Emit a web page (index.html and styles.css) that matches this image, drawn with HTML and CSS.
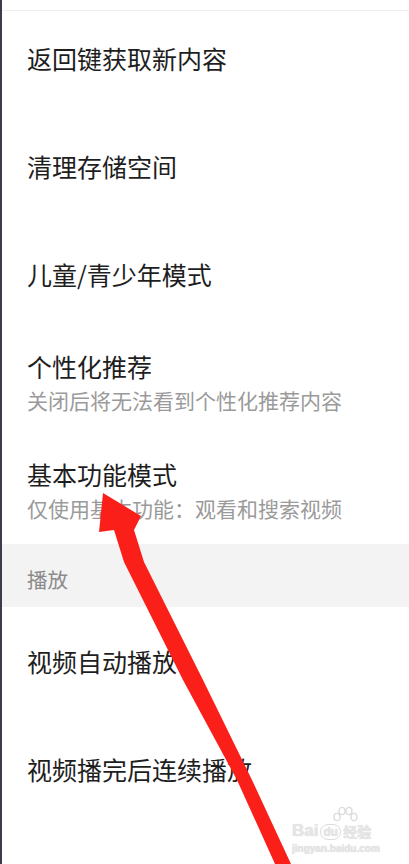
FILE: index.html
```html
<!DOCTYPE html>
<html lang="zh-CN">
<head>
<meta charset="UTF-8">
<title>设置</title>
<link rel="stylesheet" href="styles.css">
</head>
<body>

<div class="screen">

  <!-- ===== TOP EDGE ===== -->
  <div class="topEdge"></div>

  <!-- ===== GENERAL ===== -->
  <div class="row first">
    <div class="title">返回键获取新内容</div>
  </div>

  <div class="row">
    <div class="title">清理存储空间</div>
  </div>

  <div class="row">
    <div class="title">儿童/青少年模式</div>
  </div>

  <div class="row">
    <div class="title">个性化推荐</div>
    <div class="sub">关闭后将无法看到个性化推荐内容</div>
  </div>

  <div class="row">
    <div class="title">基本功能模式</div>
    <div class="sub">仅使用基本功能：观看和搜索视频</div>
  </div>

  <!-- ===== PLAYBACK ===== -->
  <div class="section">播放</div>

  <div class="row">
    <div class="title">视频自动播放</div>
  </div>

  <div class="row">
    <div class="title">视频播完后连续播放</div>
  </div>

  <!-- ===== ANNOTATION ===== -->
  <svg class="arrow" width="409" height="864" viewBox="0 0 409 864">
    <polygon fill="#fb1f1a"
      points="103,493 141,516 134,530 144,562 203,680 252,780 291,864 275,864 237,780 183,680 124,562 114,530 99,532"/>
  </svg>

  <div class="watermark">
    <svg class="paw" width="30" height="22" viewBox="0 0 30 22">
      <g fill="none" stroke="#dcdcdc" stroke-width="1.4">
        <ellipse cx="7" cy="11" rx="3" ry="3.6"/>
        <ellipse cx="12" cy="5" rx="3" ry="3.6"/>
        <ellipse cx="19" cy="5" rx="3" ry="3.6"/>
        <ellipse cx="24" cy="11" rx="3" ry="3.6"/>
      </g>
    </svg>
    <div class="wmLine"><span class="wmBai">Bai</span><span class="wmDu">du</span><span class="wmJy">经验</span></div>
    <div class="wmUrl">jingyan.baidu.com</div>
  </div>

</div>

</body>
</html>
```

FILE: styles.css
```css
body {
  margin: 0;
  background: #ffffff;
  font-family: "Noto Sans CJK SC", "Noto Sans", sans-serif;
  color: #1e1e1e;
}

.screen {
  position: relative;
  width: 407px;
  height: 864px;
  overflow: hidden;
  border-left: 2px solid #3d3d47;
  background: #ffffff;
}

/* ===== TOP EDGE ===== */
.topEdge {
  height: 10px;
  border-bottom: 1px solid #efefef;
}

/* ===== ROWS ===== */
.row {
  height: 108px;
  box-sizing: border-box;
  padding-left: 25px;
  display: flex;
  flex-direction: column;
  justify-content: center;
}

.row.first {
  height: 101px;
  padding-bottom: 7px;
}

.title {
  font-size: 25px;
  line-height: 32px;
  color: #1e1e1e;
}

.sub {
  margin-top: 5px;
  font-size: 21px;
  line-height: 27px;
  color: #9a9a9a;
}

/* ===== SECTION ===== */
.section {
  height: 63px;
  box-sizing: border-box;
  padding: 6px 0 0 25px;
  display: flex;
  align-items: center;
  background: #f3f3f3;
  font-size: 20.5px;
  color: #8a8a8a;
}

/* ===== ANNOTATION ===== */
.arrow {
  position: absolute;
  left: -2px;
  top: 0;
  pointer-events: none;
}

.watermark {
  position: absolute;
  left: 290px;
  top: 808px;
  width: 100px;
  color: #e6e6e6;
  font-family: "Liberation Sans", Arial, sans-serif;
  pointer-events: none;
  text-shadow: 0 0 1px #cccccc;
}

.paw {
  position: absolute;
  left: 38px;
  top: -2px;
}

.wmLine {
  margin-top: 14px;
  display: flex;
  align-items: flex-end;
  font-size: 17px;
  font-weight: bold;
  line-height: 18px;
}

.wmDu {
  font-size: 12px;
  margin: 0 2px;
  padding: 0 2px;
  border: 1px solid #dcdcdc;
  border-radius: 8px;
  line-height: 14px;
}

.wmJy {
  font-family: "Noto Sans CJK SC", sans-serif;
  font-size: 14px;
}

.wmUrl {
  font-size: 10px;
  font-weight: bold;
  margin-top: 3px;
}
```
